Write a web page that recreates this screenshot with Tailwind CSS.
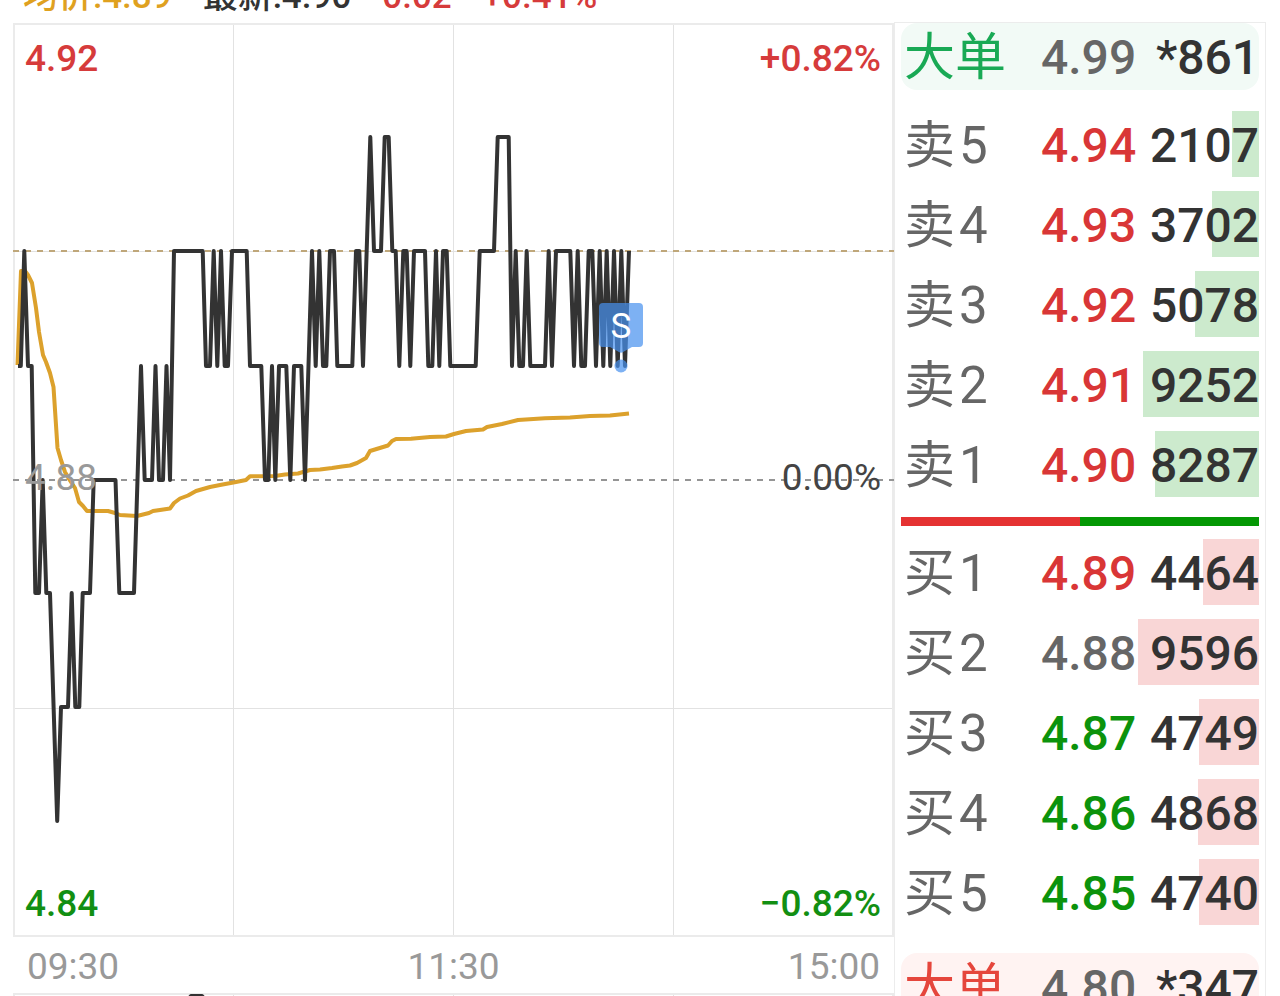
<!DOCTYPE html>
<html lang="zh-CN">
  <head>
    <meta charset="UTF-8" />
    <meta name="viewport" content="width=device-width, initial-scale=1.0" />
    <title>分时</title>
    <script src="https://cdn.jsdelivr.net/npm/@tailwindcss/browser@4"></script>
  </head>
  <body
    class="h-screen overflow-hidden bg-white text-[#333] font-medium font-[Roboto,'Noto_Sans_CJK_SC',sans-serif]"
  >
    <div class="h-full overflow-hidden flex items-start pl-[13px] pr-[14px]">
      <main class="flex-1 min-w-0">
        <!-- Header -->
        <div
          class="h-[23px] pb-[6px] pl-[10px] flex items-end gap-[31px] overflow-hidden whitespace-nowrap text-[35px] leading-10"
        >
          <span class="text-[#dfa11f]">均价:4.89</span>
          <span>最新:4.90</span>
          <span class="text-[#d63b3b]">0.02</span>
          <span class="text-[#d63b3b]">+0.41%</span>
        </div>

        <!-- Chart -->
        <div class="relative">
          <svg class="block w-full h-auto" viewBox="13 23 881 914" fill="none">
            <g stroke="#e2e2e2">
              <path d="M233.5 24V936M453.5 24V936M673.5 24V936" />
              <path d="M14 251.5H893M14 708.5H893" />
            </g>
            <rect x="14" y="24" width="879" height="912" stroke="#ebebeb" stroke-width="2" />
            <path d="M13 251H894" stroke="#bfa77a" stroke-width="2" stroke-dasharray="6 6" />
            <path d="M13 480H894" stroke="#959595" stroke-width="2" stroke-dasharray="6 6" />
            <!-- average -->
            <polyline
              stroke="#dca12c"
              stroke-width="4"
              stroke-linejoin="round"
              points="17.5,365 21,271 25,271 28,275 32,283 36,308 39,332 43,355 46,362 50,373 53.5,387 57.5,448 61,460 65,472 69,479 75,488 79,502 83,506 87,511 108,511 115,513 120,515 137,516 149,513 153,511 160,510 170,508.5 174,503 180,498.5 188,495.5 196,491 210,487 220,485 236,482 246,480 250,476.3 275,476 285,474.5 298,473.5 310,470 320,469.5 332,468 342,466.5 350,465.5 357,463 366,458 370,451 388,445.5 392,441 396,439 411,438.7 430,437 446,436.5 454,434 460,432.5 466,431 483,429.5 487,427 502,424 518,420 545,418.3 570,417.5 590,416 610,415.5 629,413.5"
            />
            <!-- price -->
            <polyline
              stroke="#333"
              stroke-width="4"
              stroke-linejoin="round"
              points="18,366 20.8,366 24.3,251 28,366 31.7,366 35.3,593 39,593 42.7,480 46.3,593 50,593 57.2,821 61,707 68,707 71.7,593 75.3,707 79.3,707 82.7,593 90,593 93.7,480 115.5,480 119.3,593 134,593 141,366 144.7,480 152,480 155.5,366 159,480 163,480 166.5,366 170,480 174,251 202.7,251 206,366 210,366 213.7,251 217.3,366 221,251 224.7,366 228,366 232,251 246.7,251 250,366 261.3,366 265,480 268.3,480 272,366 275.3,480 279,366 286.3,366 290.3,480 294,366 301.3,366 305,480 312,251 315.7,366 319.3,251 323,366 326.3,366 330,251 334,251 337.3,366 352.3,366 356,251 359.3,251 363,366 370.3,137 374,251 381,251 384.7,137 388.7,137 392.3,251 395.7,251 399.3,366 403.3,251 406.7,251 410.3,366 414,251 425,251 428.3,366 432.3,366 436,251 439.3,366 443,251 446.7,251 450.3,366 475.7,366 479.7,251 494,251 497.7,137 508.7,137 512,366 515.7,251 519.3,366 523,366 526.7,251 530.3,366 545,366 548.7,251 552,366 556,251 570.3,251 574,366 577.7,251 581.3,366 585,366 588.7,251 592.3,251 596,366 599.7,251 603.3,366 606.7,251 610.3,366 614,251 617.7,366 621.3,251 625,366 629,251"
            />
            <!-- sell marker -->
            <g fill="#4891ee" fill-opacity="0.71">
              <path
                d="M603 303H639Q643 303 643 307V343Q643 347 639 347H632L623 352Q621 353.500 619 352L610 347H603Q599 347 599 343V307Q599 303 603 303Z"
              />
              <circle cx="621" cy="366" r="6.500" />
            </g>
            <text x="621" y="338" text-anchor="middle" fill="#fff" font-size="35" font-weight="400">S</text>
          </svg>
          <div
            class="absolute inset-0 flex flex-col justify-between pl-[12px] pr-[13px] pt-[14px] pb-[11px] text-[37px] leading-[44px]"
          >
            <div class="flex justify-between text-[#d63b3b]">
              <span>4.92</span><span>+0.82%</span>
            </div>
            <div class="flex justify-between pb-2 font-normal">
              <span class="text-[#999]">4.88</span><span class="text-[#444]">0.00%</span>
            </div>
            <div class="flex justify-between text-[#128f12]">
              <span>4.84</span><span>−0.82%</span>
            </div>
          </div>
        </div>
        <div
          class="h-14 flex justify-between pl-[14px] pr-[14px] text-[37px] leading-[60px] font-normal text-[#999]"
        >
          <span>09:30</span><span>11:30</span><span>15:00</span>
        </div>

        <!-- Volume pane -->
        <svg class="block w-full h-auto" viewBox="13 993 881 60" fill="none">
          <path d="M233.500 994V1053M453.500 994V1053M673.500 994V1053" stroke="#e2e2e2" />
          <rect x="14" y="994" width="879" height="80" stroke="#ebebeb" stroke-width="2" />
          <path d="M186 1002L191 996H202L207 1002" stroke="#333" stroke-width="4" stroke-linejoin="round" />
        </svg>
      </main>

      <!-- Order book -->
      <aside class="w-[372px] mt-[22px] border border-[#ececec] px-[6px] text-[48px] leading-[70px]">
        <div class="h-[67px] flex rounded-2xl bg-[#f2faf6]">
          <span class="w-[140px] pl-[3px] text-[51px] font-normal text-[#19a955]">大单</span>
          <span class="w-24 text-[#666]">4.99</span>
          <span class="flex-1 text-right">*861</span>
        </div>
        <table class="w-full table-fixed mt-[14px]">
          <tbody id="sell"></tbody>
        </table>
        <div class="mt-[13px] h-[9px] flex">
          <div class="flex-1 bg-[#e53232]"></div>
          <div class="flex-1 bg-[#049804]"></div>
        </div>
        <table class="w-full table-fixed mt-[6px]">
          <tbody id="buy"></tbody>
        </table>
        <div class="h-[67px] mt-[21px] flex rounded-2xl bg-[#fff3f2]">
          <span class="w-[140px] pl-[3px] text-[51px] font-normal text-[#e5463c]">大单</span>
          <span class="w-24 text-[#666]">4.80</span>
          <span class="flex-1 text-right">*347</span>
        </div>
      </aside>
    </div>

    <script>
      const prevClose = 4.88;
      const maxVolume = 9596;
      const sell = [
        ["卖", 5, "4.94", 2107],
        ["卖", 4, "4.93", 3702],
        ["卖", 3, "4.92", 5078],
        ["卖", 2, "4.91", 9252],
        ["卖", 1, "4.90", 8287],
      ];
      const buy = [
        ["买", 1, "4.89", 4464],
        ["买", 2, "4.88", 9596],
        ["买", 3, "4.87", 4749],
        ["买", 4, "4.86", 4868],
        ["买", 5, "4.85", 4740],
      ];

      function renderRows(id, rows, barClass) {
        const body = document.getElementById(id);
        rows.forEach(([side, level, price, volume]) => {
          let priceClass = "text-[#666]";
          if (Number(price) > prevClose) priceClass = "text-[#d93636]";
          if (Number(price) < prevClose) priceClass = "text-[#0c930c]";

          const row = document.createElement("tr");
          row.className = "h-20 align-top";
          row.innerHTML = `
            <th class="w-[140px] p-0 pt-[7px] pl-[3px] text-left text-[51px] font-normal text-[#666]">${side}<span class="ml-1">${level}</span></th>
            <td class="w-24 p-0 pt-[7px] ${priceClass}">${price}</td>
            <td class="relative p-0 pt-[7px] text-right">
              <div class="absolute inset-y-[7px] right-0 ${barClass}" style="width: ${(volume / maxVolume) * 99}%"></div>
              <span class="relative">${volume}</span>
            </td>
          `;
          body.appendChild(row);
        });
      }

      renderRows("sell", sell, "bg-[#cceacd]");
      renderRows("buy", buy, "bg-[#f9d6d6]");
    </script>
  </body>
</html>
